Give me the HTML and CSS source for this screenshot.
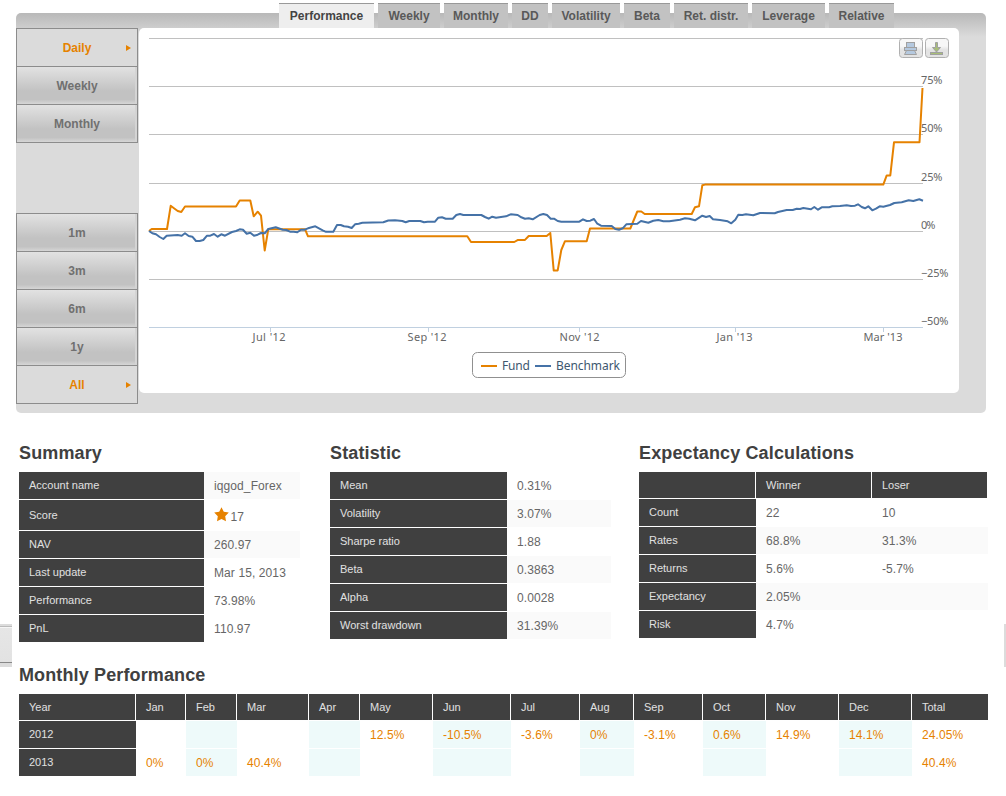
FILE: index.html
```
<!DOCTYPE html>
<html lang="en">
<head>
    <meta charset="UTF-8">
    <meta name="viewport" content="width=device-width, initial-scale=1.0">
    <title>iqgod_Forex - Performance</title>
    <link rel="stylesheet" href="styles.css">
</head>
<body>
    <div class="edge edge-left"></div>
    <div class="edge edge-right"></div>

    <div class="panel">
        <ul class="tabs">
            <li class="tab tab-performance active">Performance</li>
            <li class="tab tab-weekly">Weekly</li>
            <li class="tab tab-monthly">Monthly</li>
            <li class="tab tab-dd">DD</li>
            <li class="tab tab-volatility">Volatility</li>
            <li class="tab tab-beta">Beta</li>
            <li class="tab tab-distr">Ret. distr.</li>
            <li class="tab tab-leverage">Leverage</li>
            <li class="tab tab-relative">Relative</li>
        </ul>

        <div class="panel-body">
            <div class="sidebar">
                <ul class="side-menu">
                    <li class="active">Daily</li>
                    <li>Weekly</li>
                    <li>Monthly</li>
                </ul>
                <ul class="side-menu">
                    <li>1m</li>
                    <li>3m</li>
                    <li>6m</li>
                    <li>1y</li>
                    <li class="active">All</li>
                </ul>
            </div>

            <div class="chart">
                <svg width="820" height="365" viewBox="139 28 820 365">
                    <defs>
                        <linearGradient id="btn" x1="0" y1="0" x2="0" y2="1">
                            <stop offset="0.4" stop-color="#f7f7f7"/>
                            <stop offset="0.6" stop-color="#e3e3e3"/>
                        </linearGradient>
                    </defs>

                    <!-- grid -->
                    <path class="grid" d="M149 38.5H923M149 86.5H923M149 134.5H923M149 183.5H923M149 231.5H923M149 279.5H923"/>
                    <path class="axis" d="M149 327.5H923M270.5 327V332M428.5 327V332M579.5 327V332M735.5 327V332M883.5 327V332"/>

                    <!-- series -->
                    <polyline class="line fund" points="149,231 151.7,229 167,229 170.7,205.8 174.3,208.5 177.7,211 181.3,212 185,206.5 236,206.5 239.7,200.5 250.3,200.5 253.7,216.3 257.7,211.7 261,215.7 264.7,250.5 268.3,229.2 305,229.2 308,236.3 467.3,236.3 471,242 514.3,242 518,239.9 525,239.9 528.7,236 546.7,236 550.3,233 553.7,270.4 557.7,270.4 561.3,250 565,241.2 586.7,241.2 590,228.5 630.3,228.5 637.3,211.5 641.3,211.5 644.7,214 691.7,214 695,207.3 699,206.3 702.3,185.3 705,184.6 883.3,184.6 886.7,175.4 890.3,175.4 894,142.3 919.5,142.3 922.5,88"/>
                    <polyline class="line benchmark" points="149,231 152.3,233.3 156,234.3 159.7,237 163.3,239 166.7,235.7 177.7,235 181.7,235.7 185,233.3 188.7,236 192.3,236.7 196,241 199.7,241 203.3,240 207,235.7 210.3,235.7 214,234 217.7,236.7 221.3,234.3 225,235.7 232,232 236,231 239.7,229.3 243,229.7 246.7,233.7 250.3,232.7 254,235.7 257.7,234.7 261,233 264.7,233.3 268.3,229 275.7,227.3 282.7,229.7 286.3,230 290,231.7 293.7,231.7 297.3,232.3 301,229.7 304.7,229.7 308,228.3 315.3,226.3 322.7,230.3 326,231.8 333.3,231.8 337,225 340.7,225 344,226.3 348,226.7 351.7,228 355,224.3 358.7,223.7 362.3,222.7 383.3,222.2 388.3,220.5 395,220.2 402.3,221 405.7,222.3 409.3,221 420.3,221 424,222.3 427.7,221.7 435,221.7 438.3,217.7 442,217.3 445.7,218.7 452.7,218.7 456.3,215 460,214 463.3,215 481.3,215 485,217 488.7,218.7 492.3,216.7 496,217.7 506,216.3 510.7,214.3 517.7,215 521.3,217.3 525,218.7 528.7,218.3 532.7,219.3 539.7,215 543.3,214 547,215 550.7,218.7 554,218.7 557.7,221 561.3,221.7 579.3,221.7 583,219.3 586.7,221 590.3,220.7 594,219 597.3,223.7 601,225.7 611.7,226 615.3,229 619,229.7 622.7,228.3 626.3,224.3 637.3,223.7 641,221 648.3,222.7 653.3,220.7 658.3,220 663.3,221.3 669.3,221.3 680,219.7 685,218.3 689.3,218.7 695,220.3 702.3,215.7 706,217 709.7,216 713,219.3 720,220 727.7,221.3 731.3,223.3 735.3,219.7 738.3,214.7 742.3,215 746,214.3 753.3,215.3 760,213 774.7,213.3 778,212 786.7,210 792.7,210 796.7,208.7 800,209 803.3,208 811,209.3 814.3,207 818,209.7 821.7,207.3 829,207.3 832.3,206.3 840,206 846.7,205.3 851,206 855,205.7 858,204.3 861.7,207 865,208.3 868.3,206.3 872.3,210.3 876,208.7 879.7,206.3 883.3,206.7 890,205 894.3,203 901.7,202.3 908.7,200.3 913.3,201 919.3,199.3 923,200.7"/>

                    <g class="axis-label">
                        <text x="921" y="84" textLength="21.5">75%</text>
                        <text x="921" y="132" textLength="21.5">50%</text>
                        <text x="921" y="181" textLength="21.5">25%</text>
                        <text x="921" y="229" textLength="14.5">0%</text>
                        <text x="921" y="277" textLength="27.5">−25%</text>
                        <text x="921" y="325" textLength="27.5">−50%</text>
                        <text x="252.5" y="341" textLength="33">Jul '12</text>
                        <text x="407.5" y="341" textLength="39">Sep '12</text>
                        <text x="559.5" y="341" textLength="40">Nov '12</text>
                        <text x="716.5" y="341" textLength="36">Jan '13</text>
                        <text x="863.5" y="341" textLength="39">Mar '13</text>
                    </g>

                    <!-- legend -->
                    <rect class="legend-box" x="472.5" y="352.5" width="153" height="25" rx="5"/>
                    <path class="line fund" d="M481 366H497"/>
                    <path class="line benchmark" d="M535 366H551"/>
                    <g class="legend-label">
                        <text x="502" y="370" textLength="28">Fund</text>
                        <text x="556" y="370" textLength="64">Benchmark</text>
                    </g>

                    <!-- print / download buttons -->
                    <rect class="tool" x="899.5" y="38.5" width="23" height="19" rx="3"/>
                    <g class="tool-icon print">
                        <rect x="906.5" y="42.5" width="8" height="5"/>
                        <rect x="904.5" y="47.5" width="12" height="3"/>
                        <path d="M906.5 50.5H914.5L916.5 54.5H904.5Z"/>
                    </g>
                    <rect class="tool" x="925.5" y="38.5" width="23" height="19" rx="3"/>
                    <g class="tool-icon download">
                        <path d="M935.5 42.5H937.5V47.5H940.5L936.5 52L932.5 47.5H935.5Z"/>
                        <rect x="930.5" y="52.5" width="12" height="2"/>
                    </g>
                </svg>
            </div>
        </div>
    </div>

    <div class="stats">
        <div class="block summary">
            <h2>Summary</h2>
            <table>
                <tr class="odd"><th>Account name</th><td>iqgod_Forex</td></tr>
                <tr class="score">
                    <th>Score</th>
                    <td><svg class="star" width="15" height="15" viewBox="0 0 15 15"><path d="M7.5 0.3L9.8 4.8L14.8 5.6L11.2 9.2L12 14.3L7.5 12L3 14.3L3.8 9.2L0.2 5.6L5.2 4.8Z"/></svg> <span>17</span></td>
                </tr>
                <tr class="odd"><th>NAV</th><td>260.97</td></tr>
                <tr><th>Last update</th><td>Mar 15, 2013</td></tr>
                <tr><th>Performance</th><td>73.98%</td></tr>
                <tr><th>PnL</th><td>110.97</td></tr>
            </table>
        </div>

        <div class="block statistic">
            <h2>Statistic</h2>
            <table>
                <tr><th>Mean</th><td>0.31%</td></tr>
                <tr class="odd"><th>Volatility</th><td>3.07%</td></tr>
                <tr><th>Sharpe ratio</th><td>1.88</td></tr>
                <tr class="odd"><th>Beta</th><td>0.3863</td></tr>
                <tr><th>Alpha</th><td>0.0028</td></tr>
                <tr class="odd"><th>Worst drawdown</th><td>31.39%</td></tr>
            </table>
        </div>

        <div class="block expectancy">
            <h2>Expectancy Calculations</h2>
            <table>
                <tr class="head"><th></th><th>Winner</th><th>Loser</th></tr>
                <tr><th>Count</th><td>22</td><td>10</td></tr>
                <tr class="odd"><th>Rates</th><td>68.8%</td><td>31.3%</td></tr>
                <tr><th>Returns</th><td>5.6%</td><td>-5.7%</td></tr>
                <tr class="odd"><th>Expectancy</th><td>2.05%</td><td></td></tr>
                <tr><th>Risk</th><td>4.7%</td><td></td></tr>
            </table>
        </div>
    </div>

    <div class="block monthly">
        <h2>Monthly Performance</h2>
        <table>
            <colgroup>
                <col class="c-year"><col class="c-jan"><col class="c-feb"><col class="c-mar"><col class="c-apr">
                <col class="c-may"><col class="c-jun"><col class="c-jul"><col class="c-aug"><col class="c-sep">
                <col class="c-oct"><col class="c-nov"><col class="c-dec"><col class="c-total">
            </colgroup>
            <tr class="head">
                <th>Year</th><th>Jan</th><th>Feb</th><th>Mar</th><th>Apr</th><th>May</th><th>Jun</th>
                <th>Jul</th><th>Aug</th><th>Sep</th><th>Oct</th><th>Nov</th><th>Dec</th><th>Total</th>
            </tr>
            <tr>
                <th>2012</th><td></td><td></td><td></td><td></td><td>12.5%</td><td>-10.5%</td>
                <td>-3.6%</td><td>0%</td><td>-3.1%</td><td>0.6%</td><td>14.9%</td><td>14.1%</td><td>24.05%</td>
            </tr>
            <tr>
                <th>2013</th><td>0%</td><td>0%</td><td>40.4%</td><td></td><td></td><td></td>
                <td></td><td></td><td></td><td></td><td></td><td></td><td>40.4%</td>
            </tr>
        </table>
    </div>
</body>
</html>
```
FILE: styles.css
```
* {
    box-sizing: border-box;
}

body {
    margin: 0;
    padding: 13px 0 0;
    height: 796px;
    overflow: hidden;
    position: relative;
    background-color: #fff;
    font-family: Arial, "Liberation Sans", sans-serif;
    font-size: 12px;
    color: #666;
}

ul {
    list-style: none;
    margin: 0;
    padding: 0;
}

/* pieces of the page frame showing at both sides */
.edge {
    position: absolute;
    top: 624px;
    height: 43px;
    background-color: #dcdcdc;
}

.edge-left {
    left: 0;
    width: 12px;
    background: linear-gradient(#dcdcdc 2px, #bbb 2px, #bbb 3px, #f6f6f6 3px, #f6f6f6 4px, #e6e6e6 4px, #e2e2e2 38px, #888 38px, #888 39px, #dcdcdc 39px);
}

.edge-right {
    right: 0;
    width: 2px;
}

/* chart panel */
.panel {
    width: 970px;
    height: 400px;
    margin-left: 16px;
    border-radius: 5px;
    background: linear-gradient(#b8b8b8, #dbdbdb 24px);
}

.tabs {
    display: flex;
    gap: 4px;
    height: 25px;
    margin: 0 0 0 263px;
    position: relative;
    top: -10px;
}

.tab {
    height: 25px;
    border-top: 1px solid #999;
    background-color: #c2c2c2;
    color: #595959;
    font-weight: bold;
    line-height: 24px;
    text-align: center;
    white-space: nowrap;
}

.tab.active {
    background-color: #eee;
    color: #444;
}

.tab-performance { width: 95px; }
.tab-weekly { width: 62px; }
.tab-monthly { width: 64px; }
.tab-dd { width: 36px; }
.tab-volatility { width: 68px; }
.tab-beta { width: 46px; }
.tab-distr { width: 74px; }
.tab-leverage { width: 73px; }
.tab-relative { width: 65px; }

.panel-body {
    display: flex;
    gap: 1px;
    margin-top: -10px;
}

.sidebar {
    display: flex;
    flex-direction: column;
    gap: 70px;
    width: 122px;
}

.side-menu {
    border: 1px solid #8c8c8c;
    border-top: none;
}

.side-menu li {
    position: relative;
    height: 38px;
    border-top: 1px solid #8c8c8c;
    background: linear-gradient(#e2e2e2, #c2c2c2 65%, #c2c2c2 88%, #d6d6d6);
    box-shadow: inset -2px 0 0 #d4d4d4;
    color: #707070;
    font-weight: bold;
    line-height: 38px;
    text-align: center;
}

.side-menu li.active {
    background: #dbdbdb;
    box-shadow: none;
    color: #e68200;
}

.side-menu li.active::after {
    content: "";
    position: absolute;
    right: 6px;
    top: 16px;
    border: 3px solid transparent;
    border-left: 5px solid #e68200;
    border-right: none;
}

.chart {
    width: 820px;
    height: 365px;
    border-radius: 5px;
    background-color: #fff;
}

.chart svg {
    display: block;
}

.grid {
    stroke: #c0c0c0;
}

.axis {
    fill: none;
    stroke: #c0d0e0;
}

.line {
    fill: none;
    stroke-width: 2;
    stroke-linejoin: round;
}

.fund {
    stroke: #e68200;
}

.benchmark {
    stroke: #4572a7;
}

.axis-label {
    font-family: "Noto Sans", sans-serif;
    font-size: 11px;
    fill: #666;
}

.legend-box {
    fill: #fff;
    stroke: #909090;
}

.legend-label {
    font-family: "Noto Sans", sans-serif;
    font-size: 12px;
    fill: #3e576f;
}

.tool {
    fill: url(#btn);
    stroke: #b0b0b0;
}

.tool-icon {
    stroke: #a0a0a0;
}

.print {
    fill: #b5c9df;
}

.download {
    fill: #a8bf77;
}

/* tables */
.stats {
    display: flex;
    height: 222px;
    padding: 28px 0 0 19px;
}

.summary {
    width: 311px;
}

.statistic {
    width: 309px;
}

h2 {
    height: 31px;
    margin: 0;
    color: #404040;
    font-size: 18px;
    line-height: 24px;
    letter-spacing: 0.13px;
    white-space: nowrap;
}

table {
    table-layout: fixed;
    border-collapse: separate;
    border-spacing: 0;
}

th,
td {
    height: 28px;
    padding: 0 0 1px 10px;
    border-bottom: 1px solid #fff;
    text-align: left;
    white-space: nowrap;
    background-clip: padding-box;
}

th {
    background-color: #404040;
    color: #e0e0e0;
    font-size: 11px;
    font-weight: normal;
}

td {
    padding-bottom: 0;
    letter-spacing: 0.1px;
}

.head th {
    height: 27px;
    border-right: 1px solid #fff;
}

.odd td {
    background-color: #fafafa;
}

.summary table {
    width: 281px;
}

.summary th {
    width: 185px;
}

.summary .score th,
.summary .score td {
    height: 31px;
}

.star {
    vertical-align: -1px;
    fill: #e68200;
}

.score span {
    margin-left: -2px;
}

.statistic table {
    width: 281px;
}

.statistic th {
    width: 177px;
}

.expectancy table {
    width: 349px;
}

.expectancy th:first-child {
    width: 117px;
}

.monthly {
    padding: 28px 0 0 19px;
}

.monthly table {
    width: 969px;
}

.monthly .head th:last-child {
    border-right: none;
}

.monthly td {
    color: #e68200;
}

.monthly td:nth-child(odd) {
    background-color: #eefafa;
}

.monthly .c-year { width: 117px; }
.monthly .c-jan { width: 50px; }
.monthly .c-feb { width: 51px; }
.monthly .c-mar { width: 72px; }
.monthly .c-apr { width: 51px; }
.monthly .c-may { width: 73px; }
.monthly .c-jun { width: 78px; }
.monthly .c-jul { width: 69px; }
.monthly .c-aug { width: 54px; }
.monthly .c-sep { width: 69px; }
.monthly .c-oct { width: 63px; }
.monthly .c-nov { width: 73px; }
.monthly .c-dec { width: 73px; }
.monthly .c-total { width: 76px; }
```
